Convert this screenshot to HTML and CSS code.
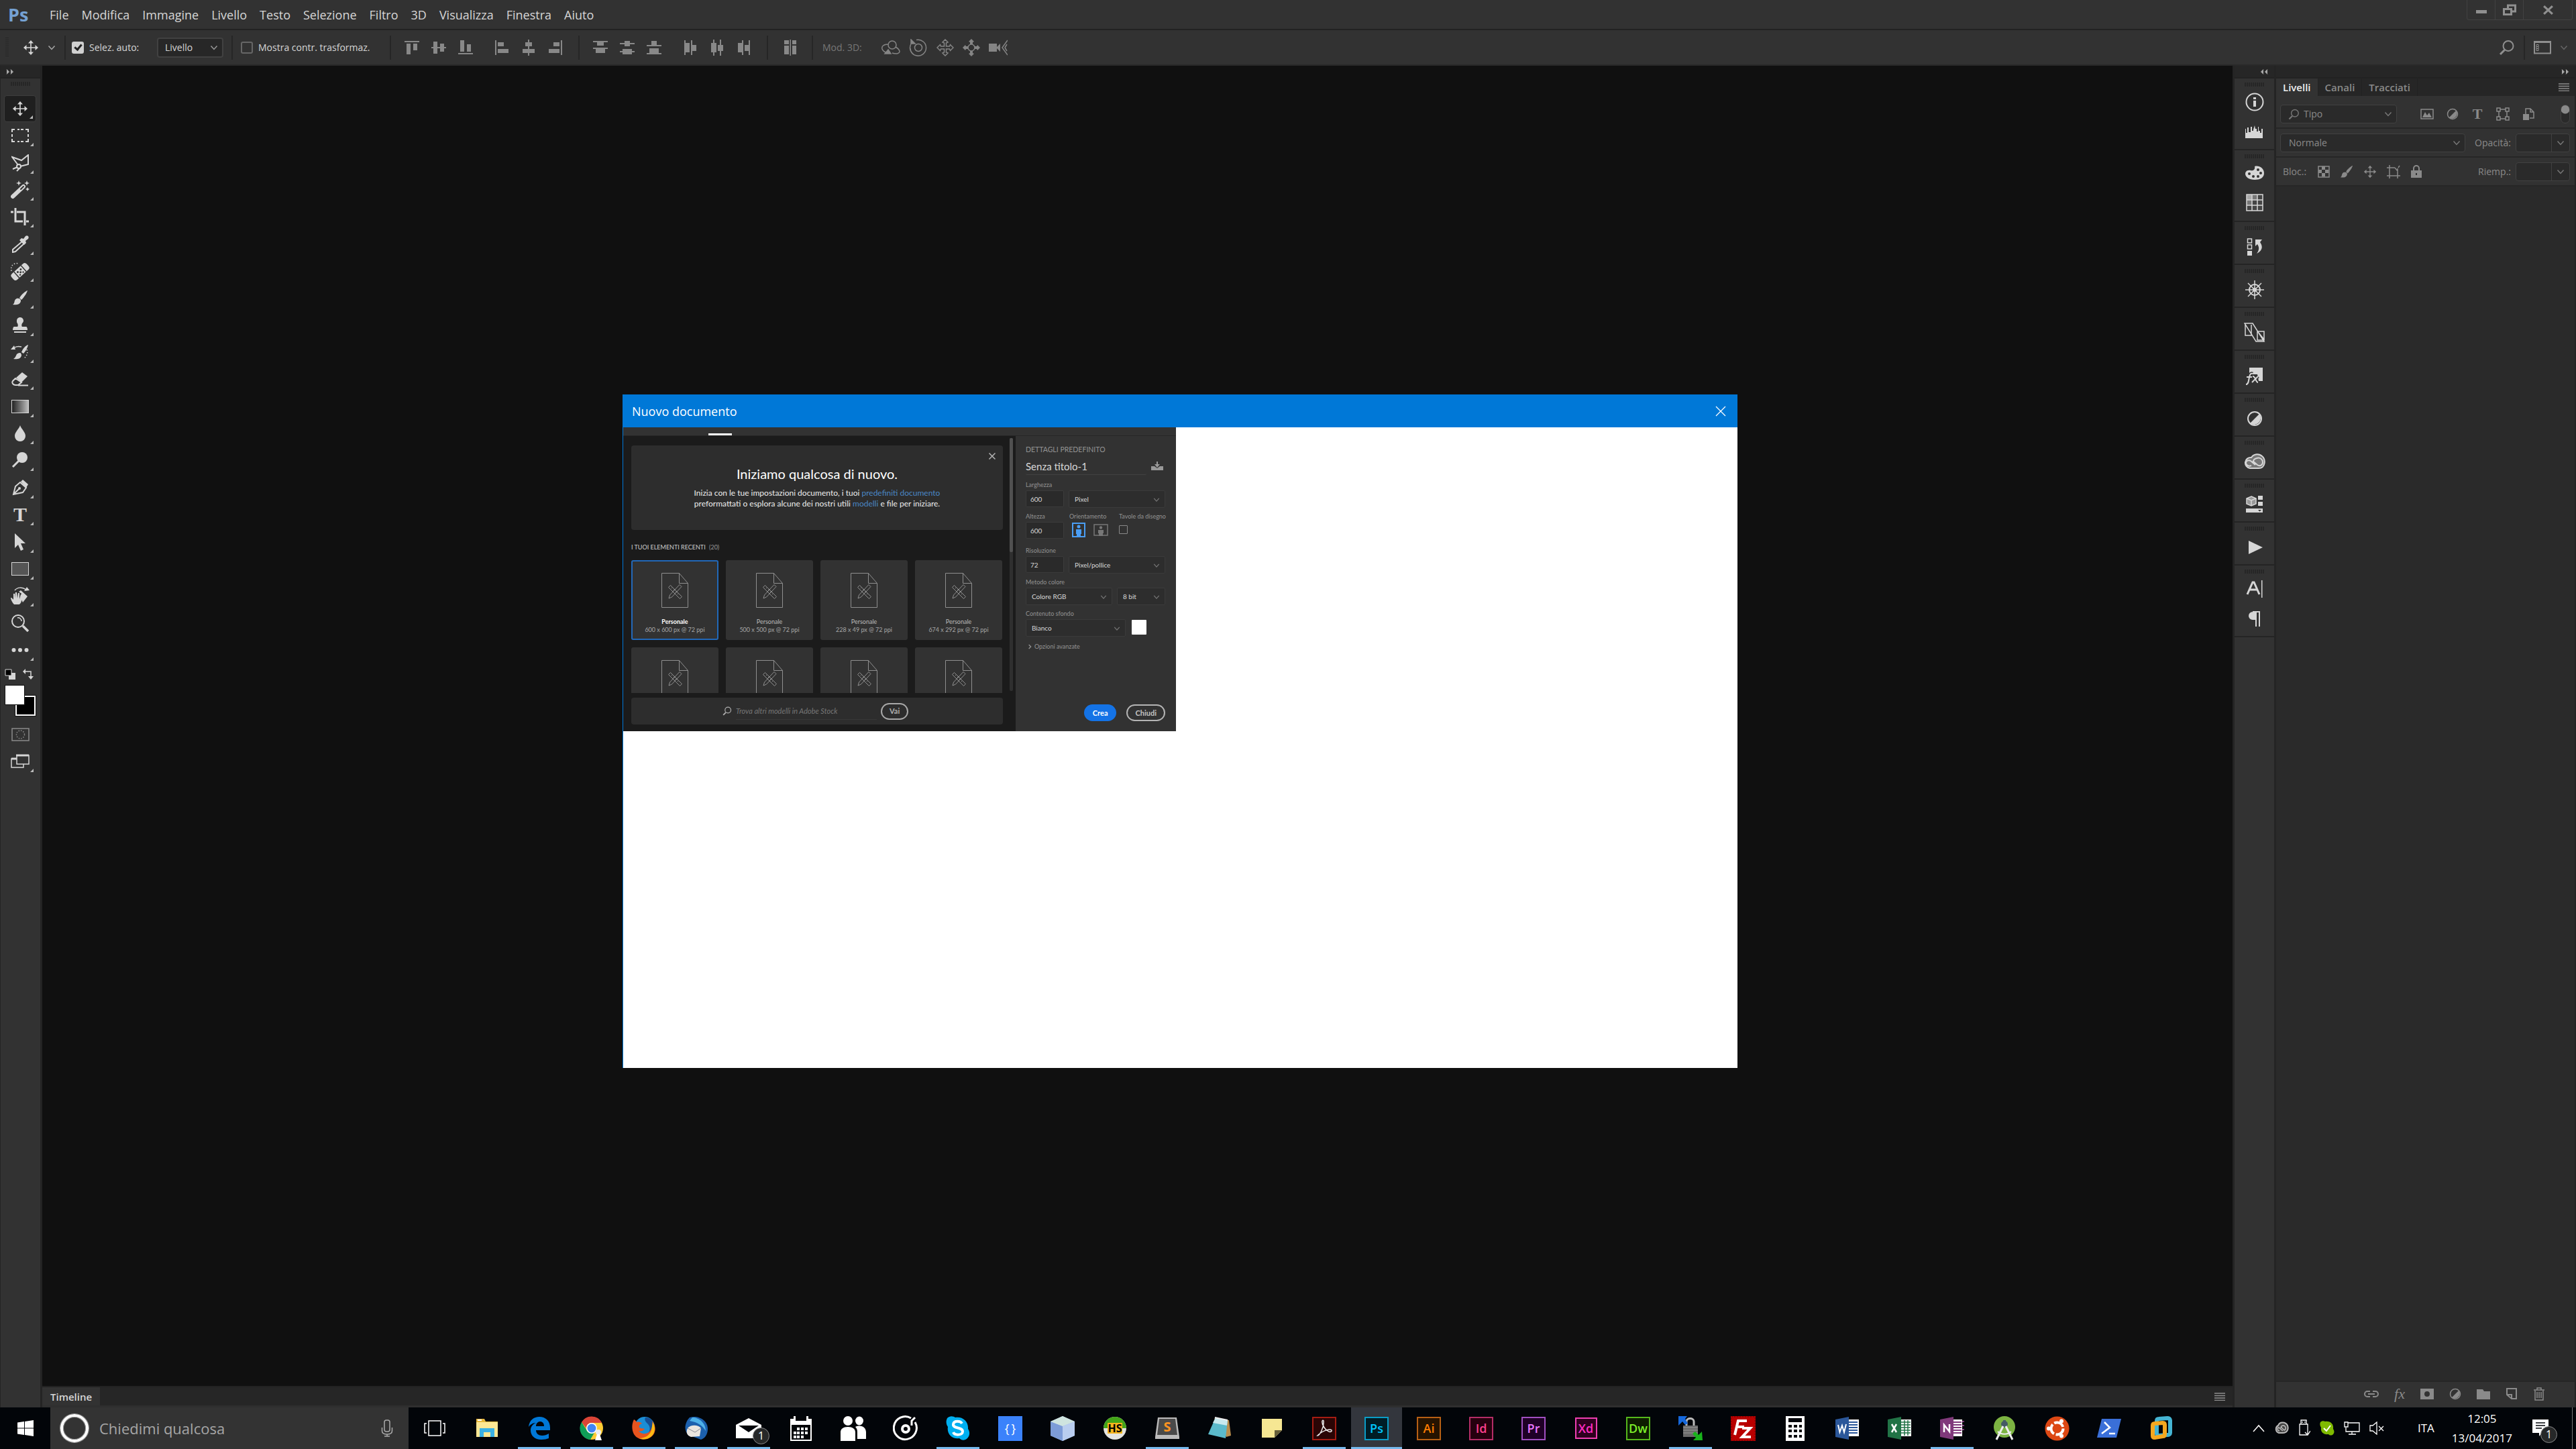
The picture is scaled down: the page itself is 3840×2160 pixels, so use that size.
FILE: index.html
```
<!DOCTYPE html>
<html lang="it">
<head>
    <meta charset="UTF-8">
    <meta name="viewport" content="width=device-width, initial-scale=1.0">
    <title>Nuovo documento</title>
    <link rel="stylesheet" href="styles.css">
</head>
<body>

<!-- icone condivise -->
<svg class="sprite" aria-hidden="true">
    <symbol id="i-move" viewBox="0 0 24 24"><path d="M12 4v16M4 12h16" fill="none" stroke="currentColor" stroke-width="1.6"/><path d="M12 1l4 4.5H8zM12 23l-4-4.500h8zM1 12l4.500-4v8zM23 12l-4.500 4V8z" fill="currentColor"/></symbol>
    <symbol id="i-chevron" viewBox="0 0 12 12"><path d="M1.500 3.500L6 8.500l4.500-5" fill="none" stroke="currentColor" stroke-width="1.5"/></symbol>
    <symbol id="i-chevright" viewBox="0 0 12 12"><path d="M4 1.500L8.500 6 4 10.500" fill="none" stroke="currentColor" stroke-width="2"/></symbol>
    <symbol id="i-next" viewBox="0 0 12 10"><path d="M1 1.500L4.500 5 1 8.500M7 1.500L10.500 5 7 8.500" fill="currentColor" stroke="currentColor"/></symbol>
    <symbol id="i-prev" viewBox="0 0 12 10"><path d="M5 1.500L1.500 5 5 8.500M11 1.500L7.500 5 11 8.500" fill="currentColor" stroke="currentColor"/></symbol>
    <symbol id="i-search" viewBox="0 0 24 24"><circle cx="14" cy="9.500" r="7.500" fill="none" stroke="currentColor" stroke-width="2"/><path d="M8.500 15.500L2 22" stroke="currentColor" stroke-width="3"/></symbol>
    <symbol id="i-menu" viewBox="0 0 16 12"><path d="M0 1h16M0 4.500h16M0 8h16M0 11.500h16" stroke="currentColor" stroke-width="1.6"/></symbol>
    <symbol id="i-close" viewBox="0 0 16 16"><path d="M2 2l12 12M14 2L2 14" stroke="currentColor" stroke-width="2"/></symbol>
    <symbol id="i-adjust" viewBox="0 0 24 24"><circle cx="12" cy="12" r="10" fill="none" stroke="currentColor" stroke-width="2"/><path d="M19 5A10 10 0 0 1 5 19z" fill="currentColor"/></symbol>
    <symbol id="i-brush" viewBox="0 0 24 24"><path d="M23 1c-3 1-9 6-12 11l3 3C18 11 22 5 23 1zM10 13c-4-1-6 2-6.500 5-.4 2-1 3-2.500 4 5 1 11 0 12-5 .3-2-1-4-3-4z" fill="currentColor"/></symbol>
    <symbol id="i-doc" viewBox="0 0 40 56"><g fill="none" stroke="#8f8f8f"><path d="M.5.500h26l13 15v36h-39zM26.500.500v15h13"/><path d="M13.500 18.500l17 17-3 3-17-17z"/><path d="M27 17.500l3 3-14.500 15.500-4.500 2 1.500-5z"/><path d="M15 23l2-2M18 26l2-2M21 29l2-2M24 32l2-2"/></g></symbol>
    <!-- allinea -->
    <symbol id="a-top" viewBox="0 0 24 24"><path d="M1 2h22v2H1zM4 6h6v16H4zM14 6h6v10h-6z" fill="currentColor"/></symbol>
    <symbol id="a-mid" viewBox="0 0 24 24"><path d="M1 11h22v2H1zM4 3h6v18H4zM14 6h6v12h-6z" fill="currentColor"/></symbol>
    <symbol id="a-bot" viewBox="0 0 24 24"><path d="M1 20h22v2H1zM4 1h6v17H4zM14 7h6v11h-6z" fill="currentColor"/></symbol>
    <symbol id="a-left" viewBox="0 0 24 24"><path d="M2 1h2v22H2zM6 4h9v6H6zM6 14h16v6H6z" fill="currentColor"/></symbol>
    <symbol id="a-cen" viewBox="0 0 24 24"><path d="M11 0h2v24h-2zM7 4h10v6H7zM3 14h18v6H3z" fill="currentColor"/></symbol>
    <symbol id="a-right" viewBox="0 0 24 24"><path d="M20 1h2v22h-2zM9 4h9v6H9zM2 14h16v6H2z" fill="currentColor"/></symbol>
    <symbol id="d-top" viewBox="0 0 24 24"><path d="M1 2h22v2H1zM7 4h10v5H7zM1 12h22v2H1zM5 14h14v6H5z" fill="currentColor"/></symbol>
    <symbol id="d-mid" viewBox="0 0 24 24"><path d="M1 5h22v2H1zM8 2h8v8H8zM1 17h22v2H1zM5 14h14v8H5z" fill="currentColor"/></symbol>
    <symbol id="d-bot" viewBox="0 0 24 24"><path d="M1 8h22v2H1zM8 2h8v7H8zM1 20h22v2H1zM5 13h14v7H5z" fill="currentColor"/></symbol>
    <symbol id="d-left" viewBox="0 0 24 24"><path d="M3 1h2v22H3zM5 5h6v14H5zM13 1h2v22h-2zM15 8h6v9h-6z" fill="currentColor"/></symbol>
    <symbol id="d-cen" viewBox="0 0 24 24"><path d="M6 0h2v24H6zM3 5h8v14H3zM16 0h2v24h-2zM13 8h8v9h-8z" fill="currentColor"/></symbol>
    <symbol id="d-right" viewBox="0 0 24 24"><path d="M9 1h2v22H9zM3 5h6v14H3zM19 1h2v22h-2zM13 8h6v9h-6z" fill="currentColor"/></symbol>
</svg>

<div class="app">

    <header class="menubar">
        <div class="logo">Ps</div>
        <nav class="menu">
            <a href="#">File</a>
            <a href="#">Modifica</a>
            <a href="#">Immagine</a>
            <a href="#">Livello</a>
            <a href="#">Testo</a>
            <a href="#">Selezione</a>
            <a href="#">Filtro</a>
            <a href="#">3D</a>
            <a href="#">Visualizza</a>
            <a href="#">Finestra</a>
            <a href="#">Aiuto</a>
        </nav>
        <div class="window-buttons">
            <button type="button" aria-label="Riduci"><svg width="16" height="16" viewBox="0 0 16 16"><path d="M0 8h16v5H0z" fill="currentColor"/></svg></button>
            <button type="button" aria-label="Ripristina"><svg width="20" height="18" viewBox="0 0 20 18"><path d="M7.500 6V2h11v9H13M1.500 7.500h11v8h-11z" fill="none" stroke="currentColor" stroke-width="3"/></svg></button>
            <button type="button" class="wide" aria-label="Chiudi"><svg width="17" height="17" viewBox="0 0 16 16"><path d="M2 3l12 11M14 3L2 14" stroke="currentColor" stroke-width="3"/></svg></button>
        </div>
    </header>

    <div class="options">
        <div class="opt first">
            <span class="grip-v"></span>
            <svg class="move" width="24" height="24"><use href="#i-move"/></svg>
            <svg class="chev" width="12" height="12"><use href="#i-chevron"/></svg>
        </div>
        <div class="opt auto">
            <label class="check"><input type="checkbox" checked> Selez. auto:</label>
            <span class="select"><select aria-label="Seleziona"><option>Livello</option></select><svg width="12" height="12"><use href="#i-chevron"/></svg></span>
        </div>
        <div class="opt transform">
            <label class="check"><input type="checkbox"> Mostra contr. trasformaz.</label>
        </div>
        <div class="opt align">
            <svg width="24" height="24"><use href="#a-top"/></svg>
            <svg width="24" height="24"><use href="#a-mid"/></svg>
            <svg width="24" height="24"><use href="#a-bot"/></svg>
            <svg class="apart" width="24" height="24"><use href="#a-left"/></svg>
            <svg width="24" height="24"><use href="#a-cen"/></svg>
            <svg width="24" height="24"><use href="#a-right"/></svg>
        </div>
        <div class="opt align">
            <svg width="24" height="24"><use href="#d-top"/></svg>
            <svg width="24" height="24"><use href="#d-mid"/></svg>
            <svg width="24" height="24"><use href="#d-bot"/></svg>
            <svg class="apart" width="24" height="24"><use href="#d-left"/></svg>
            <svg width="24" height="24"><use href="#d-cen"/></svg>
            <svg width="24" height="24"><use href="#d-right"/></svg>
        </div>
        <div class="opt single">
            <svg width="24" height="24" viewBox="0 0 24 24"><path d="M3 1h7v6H3zM3 9h7v13H3zM11.500 0h1.500v24h-1.500zM15 1h6v6h-6zM15 9h6v13h-6z" fill="currentColor"/></svg>
        </div>
        <div class="opt mode3d">
            <span>Mod. 3D:</span>
            <svg width="28" height="24" viewBox="0 0 28 24" fill="none" stroke="currentColor" stroke-width="1.500"><circle cx="16" cy="8" r="6"/><path d="M10 7C3 7 0 10 1 14c1 3 4 5 8 6M21 11c7 4 8 9 2 10-3 0-5 0-7-1"/><path d="M10 15l4 6H5z" fill="currentColor"/></svg>
            <svg width="28" height="26" viewBox="0 0 28 26" fill="none" stroke="currentColor" stroke-width="1.500"><circle cx="14" cy="13" r="5.500"/><path d="M11 1.500a12 12 0 1 1-8 6M2 14a12 12 0 0 0 5 9"/><path d="M3 1v6h6z" fill="currentColor"/></svg>
            <svg width="26" height="26" viewBox="0 0 26 26" fill="none" stroke="currentColor" stroke-width="1.500"><path d="M13 1l4 4-2.500 1v5h5l1-2.500 4.500 4.500-4.500 4.500-1-2.500h-5v5l2.500 1-4 4-4-4 2.500-1v-5h-5l-1 2.500L1 13l4.500-4.500 1 2.500h5V6L9 5z"/></svg>
            <svg width="26" height="26" viewBox="0 0 26 26"><circle cx="13" cy="13" r="5" fill="none" stroke="currentColor" stroke-width="1.500"/><path d="M13 0l4 4-2 1v3h-4V5L9 4zM13 26l-4-4 2-1v-3h4v3l2 1zM0 13l4-4 1 2h3v4H5l-1 2zM26 13l-4 4-1-2h-3v-4h3l1-2z" fill="currentColor"/></svg>
            <svg width="28" height="24" viewBox="0 0 28 24"><path d="M0 6h12v12H0zM12 11l5-5v12l-5-5z" fill="currentColor"/><path d="M28 1l-8 11 8 11M27 7l-3 5 3 5" fill="none" stroke="currentColor" stroke-width="1.500"/></svg>
        </div>
        <div class="opt-right">
            <svg width="24" height="24"><use href="#i-search"/></svg>
            <span class="divider"></span>
            <svg width="26" height="20" viewBox="0 0 26 20"><path d="M1 1.500h24v17H1z" fill="none" stroke="currentColor" stroke-width="2"/><path d="M0 0h26v3H0z" fill="currentColor"/><path d="M4 5.500h3v3H4zM4 8.500h3v3H4zM4 11.500h3v3H4z" fill="none" stroke="currentColor"/></svg>
            <svg class="chev" width="12" height="12"><use href="#i-chevron"/></svg>
        </div>
    </div>

    <main class="workspace">

        <aside class="toolbar">
            <div class="strip"><svg width="12" height="10"><use href="#i-next"/></svg></div>
            <span class="grip"></span>
            <div class="tools">
                <button type="button" class="tool active" aria-label="Sposta"><svg width="24" height="24"><use href="#i-move"/></svg></button>
                <button type="button" class="tool" aria-label="Selezione rettangolare"><svg width="26" height="24" viewBox="0 0 26 24" fill="none" stroke="currentColor" stroke-width="2"><path d="M1 7V3h4M9 3h3M14 3h4M21 3h4v4M25 10v4M25 17v4h-4M18 21h-4M12 21H9M5 21H1v-4M1 14v-4"/></svg></button>
                <button type="button" class="tool" aria-label="Lazo"><svg width="26" height="26" viewBox="0 0 26 26" fill="none" stroke="currentColor" stroke-width="2"><path d="M10 16L1 4l14 5 10-8v14l-12 3"/><circle cx="11" cy="18" r="3"/><path d="M9 19l-7 3M12 21l-4 4"/></svg></button>
                <button type="button" class="tool" aria-label="Bacchetta magica"><svg width="28" height="28" viewBox="0 0 28 28"><path d="M3 24L19 9" stroke="currentColor" stroke-width="6" stroke-linecap="round"/><path d="M15 13l4-4" stroke="#323232" stroke-width="2" stroke-linecap="round"/><path d="M12 0l1 3 3 1-3 1-1 3-1-3-3-1 3-1zM24 0l1 3 3 1-3 1-1 3-1-3-3-1 3-1zM25 10l1 2 2 1-2 1-1 2-1-2-2-1 2-1z" fill="currentColor"/></svg></button>
                <button type="button" class="tool" aria-label="Taglierina"><svg width="28" height="26" viewBox="0 0 28 26" fill="none" stroke="currentColor" stroke-width="3"><path d="M7 0v20h11M23 20h4M0 6h4M9 6h12v20"/></svg></button>
                <button type="button" class="tool" aria-label="Contagocce"><svg width="26" height="26" viewBox="0 0 26 26"><path d="M16 9l3 3L6 24l-4 1v-4z" fill="none" stroke="currentColor" stroke-width="2"/><path d="M12 7l3-3 3 1 3-4c3-2 6 1 4 4l-4 3 1 3-3 3z" fill="currentColor"/></svg></button>
                <button type="button" class="tool" aria-label="Cerotto"><svg width="28" height="28" viewBox="0 0 28 28"><g transform="rotate(-42 14 15)"><rect x="-1" y="9" width="30" height="12" rx="4" fill="currentColor"/><path d="M7 9v12M21 9v12" stroke="#323232" stroke-width="1.500"/><g fill="#323232"><circle cx="11" cy="13" r="1.500"/><circle cx="17" cy="13" r="1.500"/><circle cx="14" cy="16" r="1.500"/><circle cx="11" cy="18.500" r="1.200"/><circle cx="17" cy="18.500" r="1.200"/></g></g><path d="M1 14C-1 6 5 1 12 3" fill="none" stroke="currentColor" stroke-width="1.500" stroke-dasharray="1.500 2.500"/></svg></button>
                <button type="button" class="tool" aria-label="Pennello"><svg width="24" height="24"><use href="#i-brush"/></svg></button>
                <button type="button" class="tool" aria-label="Timbro clone"><svg width="24" height="24" viewBox="0 0 24 24"><path d="M7 5a5 5 0 1 1 8 4c-1 2-1 4 0 5h6c1 0 2 2 2 5H1c0-3 1-5 2-5h5c1-1 1-3 0-5-1-1-1-2-1-4zM3 21h18v2H3z" fill="currentColor"/></svg></button>
                <button type="button" class="tool" aria-label="Pennello storia"><svg width="28" height="24" viewBox="0 0 28 24"><path d="M26 1c-4 1-8 6-10 11l3 2c4-4 6-9 7-13zM14 13c-3 0-5 1-6 4-1 2-2 4-4 5 5 1 11 0 12-5 0-2-1-4-2-4zM0 8l5-6 2 6z" fill="currentColor"/><path d="M6 5c3-2 6-2 10-1" fill="none" stroke="currentColor" stroke-width="1.500"/><path d="M24 8c2 5 0 10-5 14" fill="none" stroke="currentColor" stroke-width="1.500" stroke-dasharray="1.500 2.500"/></svg></button>
                <button type="button" class="tool" aria-label="Gomma"><svg width="26" height="24" viewBox="0 0 26 24"><path d="M7 10L16 2l8 6-9 9z" fill="currentColor"/><path d="M6 11l-4 4c-2 3 1 6 4 6h4l5-4zM10 21.500h15" fill="none" stroke="currentColor" stroke-width="2"/></svg></button>
                <button type="button" class="tool" aria-label="Sfumatura"><span class="gradient"></span></button>
                <button type="button" class="tool" aria-label="Sfoca"><svg width="24" height="26" viewBox="0 0 24 26"><path d="M12 1c2 6 8 10 8 16a8 8 0 0 1-16 0C4 11 10 7 12 1z" fill="currentColor"/></svg></button>
                <button type="button" class="tool" aria-label="Scherma"><svg width="26" height="26" viewBox="0 0 26 26"><circle cx="16" cy="9" r="8" fill="currentColor"/><path d="M11 14L2 23" stroke="currentColor" stroke-width="3"/></svg></button>
                <button type="button" class="tool" aria-label="Penna"><svg width="24" height="24" viewBox="0 0 24 24"><path d="M2 22L5 10l7-6 9 8-5 7zM2 22l8-8" fill="none" stroke="currentColor" stroke-width="2"/><path d="M13 3l3-3 8 7-3 5z" fill="currentColor"/><circle cx="11" cy="13" r="2" fill="currentColor"/></svg></button>
                <button type="button" class="tool letter" aria-label="Testo">T</button>
                <button type="button" class="tool" aria-label="Selezione tracciato"><svg width="20" height="28" viewBox="0 0 20 28"><path d="M2 1l16 15h-7l4 9-4 2-4-9-5 5z" fill="currentColor"/></svg></button>
                <button type="button" class="tool" aria-label="Rettangolo"><span class="shape"></span></button>
                <button type="button" class="tool" aria-label="Ruota vista"><svg width="28" height="28" viewBox="0 0 28 28"><path d="M15 6l10 9-7 9-2-4V11l-4-3zM5 27c-3-3-5-8-5-10 2 0 3 2 4 3V11h2v7l1-9h2l1 9 1-8h2v9l2-7h2l-1 10c-1 4-3 5-4 5zM20 7l8-1-4-5z" fill="currentColor"/><path d="M6 6c4-5 11-5 17-1" fill="none" stroke="currentColor" stroke-width="1.500"/></svg></button>
                <button type="button" class="tool plain" aria-label="Zoom"><svg width="26" height="26" viewBox="0 0 26 26" fill="none" stroke="currentColor"><circle cx="10" cy="10" r="9" stroke-width="2"/><path d="M9 5c3-1 6 2 6 5" stroke-width="1.500"/><path d="M17 17l8 8" stroke-width="3.500"/></svg></button>
                <button type="button" class="tool" aria-label="Altro"><svg width="26" height="8" viewBox="0 0 26 8" fill="currentColor"><circle cx="3.500" cy="4" r="3"/><circle cx="13" cy="4" r="3"/><circle cx="22.500" cy="4" r="3"/></svg></button>
            </div>
            <div class="color-actions">
                <svg width="16" height="16" viewBox="0 0 16 16"><path d="M6 6h10v10H6z" fill="currentColor"/><path d="M1 1h9v9H1z" fill="#000" stroke="currentColor"/></svg>
                <svg width="16" height="16" viewBox="0 0 16 16"><path d="M3 4h9v9" fill="none" stroke="currentColor" stroke-width="1.500"/><path d="M0 4l4-4v8zM12 16l-4-5h8z" fill="currentColor"/></svg>
            </div>
            <div class="colors"><span class="back"></span><span class="front"></span></div>
            <button type="button" class="tool plain mask" aria-label="Maschera veloce"><svg width="27" height="20" viewBox="0 0 27 20" fill="none" stroke="#8a8a8a"><path d="M1 1h25v18H1z" stroke-width="1.500"/><circle cx="13.500" cy="10" r="6" stroke-width="1.500" stroke-dasharray="1.500 2"/></svg></button>
            <button type="button" class="tool" aria-label="Modo schermo"><svg width="28" height="22" viewBox="0 0 28 22" fill="none" stroke="currentColor" stroke-width="1.500"><path d="M9 7H1v13h18v-5M9 2h18v13H9z"/><path d="M8 2h19M1 7h8" stroke-width="3"/></svg></button>
        </aside>

        <section class="center">
            <div class="canvas"></div>
            <div class="timeline">
                <button type="button" class="timeline-tab">Timeline</button>
                <svg width="16" height="12"><use href="#i-menu"/></svg>
            </div>
        </section>

        <aside class="icon-dock">
            <div class="strip end"><svg width="12" height="10"><use href="#i-prev"/></svg></div>
            <div class="dock-group two">
                <span class="grip"></span>
                <svg width="28" height="28" viewBox="0 0 28 28"><circle cx="14" cy="14" r="12.500" fill="none" stroke="currentColor" stroke-width="2"/><path d="M12 7h4v3h-4zM12 12h4v9h-4z" fill="currentColor"/></svg>
                <svg width="28" height="24" viewBox="0 0 28 24"><path d="M0 21V7h1v6h2V5h2v7h3V4h2v6h2V8l2-6 1 5h2v4h2V4h1v6h2v3h2V7h2v14z" fill="currentColor"/></svg>
            </div>
            <div class="dock-group two">
                <span class="grip"></span>
                <svg width="28" height="24" viewBox="0 0 28 24"><path d="M14 2c8-2 14 4 14 10 0 7-6 10-14 10C6 22 0 18 0 13c0-4 4-6 8-5 4 1 7-1 6-6z" fill="currentColor"/><g fill="#323232"><circle cx="6" cy="13" r="2"/><circle cx="12" cy="17" r="2"/><circle cx="19" cy="17" r="2"/><circle cx="23" cy="12" r="2"/><circle cx="19" cy="7" r="2"/></g></svg>
                <svg width="26" height="26" viewBox="0 0 26 26"><path d="M1 1h24v24H1z" fill="#444"/><path d="M1 1h8v8H1z" fill="#aaa"/><path d="M9 1h8v8H9zM1 9h8v8H1z" fill="#777"/><path d="M1 1h24v24H1zM9 1v24M17 1v24M1 9h24M1 17h24" fill="none" stroke="currentColor" stroke-width="1.500"/></svg>
            </div>
            <div class="dock-group">
                <span class="grip"></span>
                <svg width="24" height="28" viewBox="0 0 24 28"><path d="M1.500 2h6v6h-6zM1.500 11h6v6h-6z" fill="none" stroke="currentColor" stroke-width="1.500"/><path d="M1 20h7v7H1zM13 3h10l-3 4c5 7 3 13-5 17 4-5 4-10 1-14l-3 3z" fill="currentColor"/></svg>
            </div>
            <div class="dock-group">
                <span class="grip"></span>
                <svg width="30" height="30" viewBox="0 0 30 30" fill="none" stroke="currentColor" stroke-width="2"><circle cx="15" cy="15" r="8"/><circle cx="15" cy="15" r="2" fill="currentColor"/><path d="M15 1v28M1 15h28M5 5l20 20M25 5L5 25" stroke-width="1.500"/></svg>
            </div>
            <div class="dock-group">
                <span class="grip"></span>
                <svg width="32" height="30" viewBox="0 0 32 30" fill="none" stroke="currentColor" stroke-width="1.500"><path d="M1 1h12l17 27H18zM2 3v16h9V3M20 13h10v13H20zM22 15l8 10"/></svg>
            </div>
            <div class="dock-group">
                <span class="grip"></span>
                <svg width="28" height="28" viewBox="0 0 28 28"><path d="M6 2h20v20h-6l-2-10H6z" fill="currentColor"/><path d="M1 27c4 0 4-6 5-11 1-4 2-6 5-5M2 16h8M11 15c5 0 4 9 8 9M19 15l-9 9" fill="none" stroke="#323232" stroke-width="5"/><path d="M1 27c4 0 4-6 5-11 1-4 2-6 5-5M2 16h8M11 15c5 0 4 9 8 9M19 15l-9 9" fill="none" stroke="currentColor" stroke-width="2"/></svg>
            </div>
            <div class="dock-group">
                <span class="grip"></span>
                <svg width="24" height="24"><use href="#i-adjust"/></svg>
            </div>
            <div class="dock-group">
                <span class="grip"></span>
                <svg width="32" height="24" viewBox="0 0 32 24" fill="none" stroke="currentColor" stroke-width="2"><path d="M9 22a8 8 0 1 1 2-16c4-6 12-6 16-2 6 5 5 18-5 18z" fill="#777"/><path d="M17 17l-7-6c-3-2-7 0-7 3s4 6 8 4M13 11l7 6c4 3 8 0 8-4s-4-8-9-6c-4 1-5 3-5 5"/></svg>
            </div>
            <div class="dock-group">
                <span class="grip"></span>
                <svg width="26" height="26" viewBox="0 0 26 26"><path d="M8 1l7 3v8l-7 3-7-3V4z" fill="#999" stroke="currentColor" stroke-width="1.500"/><path d="M1 4l7 3 7-3M8 7v8" fill="none" stroke="currentColor" stroke-width="1.500"/><path d="M18 0h7v6h-7zM18 9h7v6h-7zM0 19h25v6H0z" fill="currentColor"/><path d="M18 21h5l-2.500 2.500z" fill="#323232"/></svg>
            </div>
            <div class="dock-group">
                <span class="grip"></span>
                <svg width="24" height="24" viewBox="0 0 24 24"><path d="M3 2l21 10L3 22z" fill="currentColor"/></svg>
            </div>
            <div class="dock-group two">
                <span class="grip"></span>
                <svg width="26" height="28" viewBox="0 0 26 28"><path d="M2 22L10 4h2l8 18M6 15h10" fill="none" stroke="currentColor" stroke-width="3"/><path d="M23 1h1.500v26H23z" fill="currentColor"/></svg>
                <svg width="24" height="24" viewBox="0 0 24 24"><path d="M9 0h11v2H9zM9 13A6 6 0 0 1 9 1h4v12zM13 1h2v22h-2zM18 1h2v22h-2z" fill="currentColor"/></svg>
            </div>
        </aside>

        <aside class="layers">
            <div class="strip end"><svg width="12" height="10"><use href="#i-next"/></svg></div>
            <div class="tabs">
                <button type="button" class="selected">Livelli</button>
                <button type="button">Canali</button>
                <button type="button">Tracciati</button>
                <svg width="16" height="12"><use href="#i-menu"/></svg>
            </div>
            <div class="layer-row filter">
                <span class="select type"><svg class="lens" width="17" height="17"><use href="#i-search"/></svg><select aria-label="Filtro"><option>Tipo</option></select><svg width="12" height="12"><use href="#i-chevron"/></svg></span>
                <div class="filter-icons">
                    <svg width="20" height="18" viewBox="0 0 20 18"><path d="M1 2h18v14H1z" fill="none" stroke="currentColor" stroke-width="1.500"/><path d="M3 14l4-8 3 5 3-4 4 7z" fill="currentColor"/></svg>
                    <svg width="18" height="18"><use href="#i-adjust"/></svg>
                    <span class="t">T</span>
                    <svg width="20" height="20" viewBox="0 0 20 20" fill="none" stroke="currentColor" stroke-width="1.500"><path d="M4 3h12v14H4z"/><path d="M1 1h5v5H1zM14 1h5v5h-5zM1 14h5v5H1zM14 14h5v5h-5z" fill="#323232"/></svg>
                    <svg width="18" height="20" viewBox="0 0 18 20"><path d="M5 10V2h7l5 5v9h-6M12 2v5h5" fill="none" stroke="currentColor" stroke-width="1.500"/><path d="M1 10h9v9H1z" fill="currentColor"/></svg>
                </div>
                <span class="switch"></span>
            </div>
            <div class="layer-row">
                <span class="select blend"><select aria-label="Metodo di fusione"><option>Normale</option></select><svg width="12" height="12"><use href="#i-chevron"/></svg></span>
                <label class="amount">Opacità: <span class="number"><input type="text"><svg width="12" height="12"><use href="#i-chevron"/></svg></span></label>
            </div>
            <div class="layer-row">
                <span class="lock-label">Bloc.:</span>
                <div class="lock-icons">
                    <svg width="18" height="18" viewBox="0 0 18 18"><path d="M1 1h16v16H1z" fill="none" stroke="currentColor" stroke-width="1.500"/><path d="M6 1h5v5H6zM1 6h5v5H1zM11 6h5v5h-5zM6 11h5v5H6z" fill="currentColor"/></svg>
                    <svg width="20" height="20"><use href="#i-brush"/></svg>
                    <svg width="20" height="20"><use href="#i-move"/></svg>
                    <svg width="20" height="20" viewBox="0 0 20 20"><path d="M4 0v20M0 4h12M0 16h20M16 10v10M12 4l4 5V5M17 4l2-3" fill="none" stroke="currentColor" stroke-width="1.500"/></svg>
                    <svg width="18" height="20" viewBox="0 0 18 20"><path d="M5 9V5a4 4 0 0 1 8 0v4" fill="none" stroke="currentColor" stroke-width="2"/><path d="M1 8h16v11H1zM8 12v3h2v-3z" fill="currentColor" fill-rule="evenodd"/></svg>
                </div>
                <label class="amount">Riemp.: <span class="number"><input type="text"><svg width="12" height="12"><use href="#i-chevron"/></svg></span></label>
            </div>
            <div class="layer-list"></div>
            <div class="layer-footer">
                <svg width="22" height="18" viewBox="0 0 22 18" fill="none" stroke="currentColor" stroke-width="2"><path d="M9 5H5a4 4 0 0 0 0 8h4M13 5h4a4 4 0 0 1 0 8h-4M6 9h10"/></svg>
                <em>fx</em>
                <svg width="20" height="18" viewBox="0 0 20 18"><path d="M0 1h20v16H0zM10 5a4 4 0 1 0 0 8 4 4 0 0 0 0-8z" fill="currentColor" fill-rule="evenodd"/></svg>
                <svg width="18" height="18"><use href="#i-adjust"/></svg>
                <svg width="20" height="18" viewBox="0 0 20 18"><path d="M0 2h9l2 3h9v12H0z" fill="currentColor"/></svg>
                <svg width="18" height="18" viewBox="0 0 18 18"><path d="M2 1h14v15H9l-7-6zM9 16v-6H2" fill="none" stroke="currentColor" stroke-width="2"/></svg>
                <svg width="18" height="20" viewBox="0 0 18 20"><path d="M1 4h16M6 4V1h6v3M3 5v14h12V5M6 7v9M9 7v9M12 7v9" fill="none" stroke="currentColor" stroke-width="1.500"/></svg>
            </div>
        </aside>
    </main>

    <!-- finestra Nuovo documento -->
    <div class="dialog" role="dialog" aria-labelledby="dialog-title">
        <div class="dialog-title">
            <h1 id="dialog-title">Nuovo documento</h1>
            <button type="button" aria-label="Chiudi"><svg width="16" height="16" viewBox="0 0 16 16"><path d="M1 1l14 14M15 1L1 15" stroke="#fff" stroke-width="1.300"/></svg></button>
        </div>
        <div class="newdoc">
            <div class="newdoc-tabs"><span></span></div>
            <div class="browse">
                <div class="browse-scroll">
                    <div class="hero">
                        <button type="button" aria-label="Nascondi"><svg width="12" height="12"><use href="#i-close"/></svg></button>
                        <h2>Iniziamo qualcosa di nuovo.</h2>
                        <p>Inizia con le tue impostazioni documento, i tuoi <a href="#">predefiniti documento</a><br>preformattati o esplora alcune dei nostri utili <a href="#">modelli</a> e file per iniziare.</p>
                    </div>
                    <h3>I TUOI ELEMENTI RECENTI <span>(20)</span></h3>
                    <div class="recent">
                        <div class="preset current"><svg width="40" height="56"><use href="#i-doc"/></svg><b>Personale</b><span>600 x 600 px @ 72 ppi</span></div>
                        <div class="preset"><svg width="40" height="56"><use href="#i-doc"/></svg><b>Personale</b><span>500 x 500 px @ 72 ppi</span></div>
                        <div class="preset"><svg width="40" height="56"><use href="#i-doc"/></svg><b>Personale</b><span>228 x 49 px @ 72 ppi</span></div>
                        <div class="preset"><svg width="40" height="56"><use href="#i-doc"/></svg><b>Personale</b><span>674 x 292 px @ 72 ppi</span></div>
                        <div class="preset"><svg width="40" height="56"><use href="#i-doc"/></svg></div>
                        <div class="preset"><svg width="40" height="56"><use href="#i-doc"/></svg></div>
                        <div class="preset"><svg width="40" height="56"><use href="#i-doc"/></svg></div>
                        <div class="preset"><svg width="40" height="56"><use href="#i-doc"/></svg></div>
                    </div>
                </div>
                <div class="scrollbar"><span></span></div>
                <div class="stock">
                    <svg width="14" height="14"><use href="#i-search"/></svg>
                    <input type="text" aria-label="Cerca modelli" placeholder="Trova altri modelli in Adobe Stock">
                    <button type="button">Vai</button>
                </div>
            </div>
            <form class="details">
                <h3>DETTAGLI PREDEFINITO</h3>
                <div class="name-row">
                    <input type="text" aria-label="Nome" value="Senza titolo-1">
                    <svg width="18" height="14" viewBox="0 0 18 14"><path d="M0 7h5l4 3 4-3h5v6H0zM8 0h2v4h3L9 9 5 4h3z" fill="#999"/></svg>
                </div>
                <label for="larghezza">Larghezza</label>
                <div class="field-row">
                    <input type="text" id="larghezza" value="600">
                    <span class="select"><select aria-label="Unità"><option>Pixel</option></select><svg width="10" height="10"><use href="#i-chevron"/></svg></span>
                </div>
                <div class="triple">
                    <div>
                        <label for="altezza">Altezza</label>
                        <input type="text" id="altezza" value="600">
                    </div>
                    <div>
                        <span class="caption">Orientamento</span>
                        <div class="orient">
                            <button type="button" class="on" aria-label="Verticale"><svg width="20" height="22" viewBox="0 0 20 22"><path d="M1 1h18v20H1z" fill="none" stroke="currentColor" stroke-width="2"/><circle cx="10" cy="6" r="2.500" fill="currentColor"/><path d="M6 10h8v7h-1v4H7v-4H6z" fill="currentColor"/></svg></button>
                            <button type="button" aria-label="Orizzontale"><svg width="22" height="18" viewBox="0 0 22 18"><path d="M1 1h20v16H1z" fill="none" stroke="currentColor" stroke-width="1.500"/><circle cx="11" cy="5.500" r="2.200" fill="currentColor"/><path d="M7 9h8v5h-1v4H8v-4H7z" fill="currentColor"/></svg></button>
                        </div>
                    </div>
                    <div>
                        <label for="tavole">Tavole da disegno</label>
                        <input type="checkbox" id="tavole">
                    </div>
                </div>
                <label for="risoluzione">Risoluzione</label>
                <div class="field-row">
                    <input type="text" id="risoluzione" value="72">
                    <span class="select"><select aria-label="Unità risoluzione"><option>Pixel/pollice</option></select><svg width="10" height="10"><use href="#i-chevron"/></svg></span>
                </div>
                <label for="metodo">Metodo colore</label>
                <div class="field-row">
                    <span class="select"><select id="metodo"><option>Colore RGB</option></select><svg width="10" height="10"><use href="#i-chevron"/></svg></span>
                    <span class="select bits"><select aria-label="Profondità"><option>8 bit</option></select><svg width="10" height="10"><use href="#i-chevron"/></svg></span>
                </div>
                <label for="sfondo">Contenuto sfondo</label>
                <div class="field-row">
                    <span class="select fill"><select id="sfondo"><option>Bianco</option></select><svg width="10" height="10"><use href="#i-chevron"/></svg></span>
                    <span class="swatch"></span>
                </div>
                <button type="button" class="advanced"><svg width="8" height="8"><use href="#i-chevright"/></svg> Opzioni avanzate</button>
                <div class="actions">
                    <button type="button" class="primary">Crea</button>
                    <button type="button">Chiudi</button>
                </div>
            </form>
        </div>
    </div>
</div>

<footer class="taskbar">
    <button type="button" class="start" aria-label="Start"><svg width="24" height="24" viewBox="0 0 24 24"><path d="M0 3.500l10-1.400v9.400H0zM11 2l13-2v11.500H11zM0 12.500h10v9.400L0 20.500zM11 12.500h13V24l-13-2z" fill="#fff"/></svg></button>
    <div class="cortana">
        <span class="ring"></span>
        <input type="text" aria-label="Cerca" placeholder="Chiedimi qualcosa">
        <svg width="18" height="26" viewBox="0 0 18 26" fill="none" stroke="#aaa" stroke-width="1.500"><rect x="5" y="1" width="8" height="17" rx="3"/><path d="M1.500 12v5c0 4 3 5 7.500 5s7.500-1 7.500-5v-5M9 22v3M5 25h8"/></svg>
    </div>
    <div class="tasks">
        <button type="button" class="task" aria-label="Visualizzazione attività"><svg width="32" height="24" viewBox="0 0 32 24" fill="none" stroke="#fff" stroke-width="1.500"><path d="M7 1h18v22H7zM4 5H1v14h3M28 5h3v14h-3"/></svg></button>
        <button type="button" class="task" aria-label="Esplora file"><svg width="34" height="30" viewBox="0 0 34 30"><path d="M1 1h12l2 4h18v22H1z" fill="#e8b93c"/><path d="M1 6h32v22H1z" fill="#fde794"/><path d="M6 28V15h22v13h-6v-7H12v7z" fill="#3bb1e4"/><path d="M3 2h6v2H3z" fill="#fff"/></svg></button>
        <button type="button" class="task open" aria-label="Edge"><svg width="34" height="34" viewBox="0 0 34 34"><path d="M1 15C2 5 9 0 17 0c9 0 16 6 16 16v4H12c0 5 4 8 9 8 4 0 7-1 10-3v7c-3 1-6 2-11 2C10 34 4 28 4 20c0-5 3-9 8-11-5 0-9 3-11 6zm11-1h12c0-4-2-7-6-7-3 0-6 3-6 7z" fill="#0078d7"/></svg></button>
        <button type="button" class="task open" aria-label="Chrome"><svg width="36" height="36" viewBox="0 0 36 36"><circle cx="18" cy="18" r="17" fill="#fc3"/><path d="M3 9a17 17 0 0 1 30 1H18a8 8 0 0 0-8 8z" fill="#db4437"/><path d="M3 9a17 17 0 0 0 13 26l7-12a8 8 0 0 1-13-3z" fill="#0f9d58"/><circle cx="18" cy="18" r="8" fill="#fff"/><circle cx="18" cy="18" r="6.500" fill="#4285f4"/><circle cx="28" cy="24" r="4" fill="#eee"/><path d="M23 36l3-9h4l3 9z" fill="#fff"/></svg></button>
        <button type="button" class="task open" aria-label="Firefox"><svg width="36" height="36" viewBox="0 0 36 36"><circle cx="19" cy="16" r="15" fill="#1b8ed6"/><path d="M20 2c8 0 13 6 13 13S27 28 20 28c8-3 8-12 4-16-3-3-6-6-4-10z" fill="#174f94"/><path d="M3 5c2 1 3 2 4 4 3-1 6 0 8 2-3 1-5 3-4 6 3 2 6 1 8 2-2 3-6 4-9 3 4 6 15 6 19-3 2-4 2-8 1-12 5 6 6 13 3 19-6 11-23 12-30 1C-1 19 0 11 3 5z" fill="#e8541e"/><path d="M31 9c4 6 4 13 0 19-5 6-13 8-20 5 9 0 16-5 18-12z" fill="#fdb913"/></svg></button>
        <button type="button" class="task open" aria-label="Thunderbird"><svg width="36" height="36" viewBox="0 0 36 36"><path d="M8 2c14-4 27 5 27 17 0 8-4 14-10 16L6 28C-2 20 2 8 8 2z" fill="#1c60ad"/><path d="M12 2c10 0 20 8 20 20-5-8-12-13-24-15z" fill="#4eb1e8"/><path d="M5 18c4-5 15-6 20 0l-2 12-13 1C4 29 2 24 5 18z" fill="#e9e5df"/><path d="M5 18l11 6 9-6" fill="none" stroke="#8c8d95"/></svg></button>
        <button type="button" class="task open" aria-label="Posta"><svg width="38" height="30" viewBox="0 0 38 30"><path d="M0 10L19 0l19 10v20H0z" fill="#fff"/><path d="M4 11h30L19 21z" fill="#02050a"/></svg><span class="badge">1</span></button>
        <button type="button" class="task" aria-label="Calendario"><svg width="32" height="37" viewBox="0 0 32 37"><path d="M0 4h5V0h3v7h16V0h3v4h5v33H0zM2 13v22h28V13z" fill="#fff" fill-rule="evenodd"/><path d="M10 17h4v4h-4zM16 17h4v4h-4zM22 17h4v4h-4zM5 23h4v4H5zM10 23h4v4h-4zM16 23h4v4h-4zM22 23h4v4h-4zM5 29h4v4H5zM10 29h4v4h-4zM16 29h4v4h-4z" fill="#fff"/></svg></button>
        <button type="button" class="task" aria-label="Contatti"><svg width="38" height="37" viewBox="0 0 38 37"><ellipse cx="11" cy="7" rx="7" ry="7" fill="#fff"/><ellipse cx="28" cy="7" rx="6" ry="6.500" fill="#fff"/><path d="M0 37V24c0-5 4-8 11-8s11 3 11 8v13zM22 16c9-4 16 1 16 8v10H25V24c0-4-1-6-3-8z" fill="#fff"/></svg></button>
        <button type="button" class="task" aria-label="Groove"><svg width="38" height="38" viewBox="0 0 38 38" fill="none" stroke="#fff" stroke-width="3"><path d="M33 10A17 17 0 1 1 27 4"/><circle cx="19" cy="20" r="5" stroke-width="4"/><path d="M28 15V8l5-5"/></svg></button>
        <button type="button" class="task open" aria-label="Skype"><svg width="36" height="36" viewBox="0 0 36 36"><path d="M2 3c4-4 9-3 12-1 10-2 20 5 19 17 3 4 3 10-1 14-4 4-9 3-12 0C10 35 1 27 3 16 0 12 0 7 2 3z" fill="#00aff0"/><path d="M24 11c-2-4-12-5-13 1-1 7 14 4 14 11 0 6-12 6-14 1" fill="none" stroke="#fff" stroke-width="4"/></svg></button>
        <button type="button" class="task" aria-label="Brackets"><span class="tile brackets">{&thinsp;}</span></button>
        <button type="button" class="task" aria-label="VirtualBox"><svg width="36" height="37" viewBox="0 0 36 37"><path d="M18 0l18 8v21l-18 8L0 29V8z" fill="#a9c0e6"/><path d="M0 8l18 7v22L0 29z" fill="#7d9cd8"/><path d="M0 8l18-8 18 8-18 7z" fill="#cfe4df"/><path d="M18 15l18-7v21l-18 8z" fill="#b9cdef"/></svg></button>
        <button type="button" class="task" aria-label="HeidiSQL"><svg width="36" height="36" viewBox="0 0 36 36"><circle cx="18" cy="18" r="17" fill="#e4e4e0"/><path d="M1 18a17 17 0 0 1 34 0z" fill="#43a518"/><path d="M7 10h22v16H7z" fill="#f5b51e"/><text x="18" y="24" text-anchor="middle" class="hs">HS</text></svg></button>
        <button type="button" class="task open" aria-label="Sublime Text"><svg width="36" height="32" viewBox="0 0 36 32"><path d="M4 0h28l4 29v3H0v-3z" fill="#bcbcbc"/><path d="M6 2h24l3 24H3z" fill="#4a4a4a"/><text x="18" y="21" text-anchor="middle" class="sublime">S</text></svg></button>
        <button type="button" class="task" aria-label="Blocco note"><svg width="34" height="34" viewBox="0 0 34 34"><path d="M9 2l22 3 3 23-7 2z" fill="#b98d4c"/><path d="M11 1l18 4-3 27L0 26z" fill="#5bbacb"/><path d="M11 1l18 4-1 8L7 9z" fill="#c8e9ee"/><path d="M10 1l19 4" stroke="#eee" stroke-width="2"/></svg></button>
        <button type="button" class="task" aria-label="Note"><svg width="30" height="28" viewBox="0 0 30 28"><path d="M0 0h30v17L19 28H0z" fill="#f6e793"/><path d="M30 17H19v11z" fill="#665f3a"/></svg></button>
        <button type="button" class="task open" aria-label="Acrobat"><span class="tile acrobat"><svg width="24" height="26" viewBox="0 0 24 26"><path d="M2 24c3 0 10-12 9-22-2-3-4 3 1 10 4 6 10 8 11 5 1-4-12-2-21 7z" fill="none" stroke="#eee" stroke-width="1.500"/></svg></span></button>
        <button type="button" class="task open running" aria-label="Photoshop"><span class="tile ps">Ps</span></button>
        <button type="button" class="task" aria-label="Illustrator"><span class="tile ai">Ai</span></button>
        <button type="button" class="task" aria-label="InDesign"><span class="tile id">Id</span></button>
        <button type="button" class="task" aria-label="Premiere"><span class="tile pr">Pr</span></button>
        <button type="button" class="task" aria-label="Experience Design"><span class="tile xd">Xd</span></button>
        <button type="button" class="task" aria-label="Dreamweaver"><span class="tile dw">Dw</span></button>
        <button type="button" class="task open" aria-label="WinSCP"><svg width="36" height="36" viewBox="0 0 36 36"><path d="M12 16V8c0-6 11-6 11 0v8" fill="none" stroke="#bbb" stroke-width="3"/><path d="M7 14h22v17H7z" fill="#6a6a6a"/><path d="M7 17h22M7 21h22M7 25h22" stroke="#999"/><path d="M0 0h13l-3 4 4 7-4 2-4-5-6 6z" fill="#1568dc"/><path d="M36 36H22l4-4-5-6 4-3 5 5 5-5z" fill="#18b31b"/></svg></button>
        <button type="button" class="task" aria-label="FileZilla"><svg width="37" height="37" viewBox="0 0 37 37"><path d="M0 0h37v37H0z" fill="#b90000"/><path d="M1 1h35v35H1z" fill="none" stroke="#700" stroke-dasharray="2 2"/><path d="M24 7H11L6 28M9 16h11M17 18h12L17 31h13" fill="none" stroke="#fff" stroke-width="4"/></svg></button>
        <button type="button" class="task" aria-label="Calcolatrice"><svg width="28" height="37" viewBox="0 0 28 37"><path d="M0 0h28v37H0z" fill="#fff"/><path d="M4 3h20v6H4zM4 13h5v4H4zM12 13h5v4h-5zM20 13h4v4h-4zM4 20h5v4H4zM12 20h5v4h-5zM20 20h4v4h-4zM4 28h5v4H4zM12 28h5v4h-5zM20 28h4v4h-4z" fill="#02050a"/></svg></button>
        <button type="button" class="task" aria-label="Word"><svg width="36" height="34" viewBox="0 0 36 34"><path d="M16 4h19v25H16z" fill="#fff"/><path d="M18 8h15M18 12h15M18 16h15M18 20h15M18 24h15" stroke="#2b579a" stroke-width="2"/><path d="M0 4l20-4v34L0 30z" fill="#2b579a"/><path d="M4 12l2.500 11L10 13l3 10 3-12" fill="none" stroke="#fff" stroke-width="2"/></svg></button>
        <button type="button" class="task" aria-label="Excel"><svg width="36" height="34" viewBox="0 0 36 34"><path d="M16 4h19v25H16z" fill="#fff"/><path d="M20 8h14M20 12h14M20 16h14M20 20h14M20 24h14M25 5v23M30 5v23" stroke="#217346" stroke-width="1.500"/><path d="M0 4l20-4v34L0 30z" fill="#217346"/><path d="M6 11l7 12M13 11L6 23" stroke="#fff" stroke-width="2.500"/></svg></button>
        <button type="button" class="task open" aria-label="OneNote"><svg width="36" height="34" viewBox="0 0 36 34"><path d="M16 4h17v25H16z" fill="#fff"/><path d="M20 8h12M20 12h12M20 16h12M20 20h12M20 24h12M33 7h3M33 13h3M33 19h3" stroke="#80397b" stroke-width="2"/><path d="M0 4l20-4v34L0 30z" fill="#80397b"/><path d="M6 23V12l8 10V11" fill="none" stroke="#fff" stroke-width="2.500"/></svg></button>
        <button type="button" class="task" aria-label="Android Studio"><svg width="34" height="36" viewBox="0 0 34 36"><circle cx="17" cy="16" r="16" fill="#7cb342"/><circle cx="17" cy="12" r="5" fill="#455a64"/><path d="M15 6h4v5h-4z" fill="#455a64"/><path d="M15 15L5 35M19 15l10 20" stroke="#eee" stroke-width="3"/><path d="M7 23c5 5 15 5 20 0" fill="none" stroke="#eee" stroke-width="2"/></svg></button>
        <button type="button" class="task" aria-label="Ubuntu"><svg width="37" height="37" viewBox="0 0 37 37"><circle cx="18.500" cy="18.500" r="18" fill="#dd4814"/><circle cx="18.500" cy="18.500" r="9" fill="none" stroke="#fff" stroke-width="4" stroke-dasharray="16 2.850"/><circle cx="6" cy="18.500" r="3" fill="#fff"/><circle cx="25" cy="7.500" r="3" fill="#fff"/><circle cx="25" cy="29.500" r="3" fill="#fff"/></svg></button>
        <button type="button" class="task" aria-label="PowerShell"><svg width="36" height="28" viewBox="0 0 36 28"><path d="M7 0h29l-7 28H0z" fill="#3a6fd8"/><path d="M11 5l8 8L7 22M18 22h9" fill="none" stroke="#fff" stroke-width="2.500"/></svg></button>
        <button type="button" class="task" aria-label="VMware"><svg width="34" height="36" viewBox="0 0 34 36"><path d="M13 4l13-1c2 0 4 1 4 3v19c0 2-2 3-4 3l-13 1c-2 0-3-1-3-3V7c0-2 1-3 3-3z" fill="none" stroke="#45b5d3" stroke-width="6"/><path d="M7 11l12-1c2 0 3 1 3 3v14c0 2-1 3-3 3L7 32c-2 0-3-1-3-3V14c0-2 1-3 3-3z" fill="none" stroke="#f5a81f" stroke-width="6"/></svg></button>
    </div>
    <div class="tray">
        <svg width="18" height="12" viewBox="0 0 18 12"><path d="M1 11l8-9 8 9" fill="none" stroke="#fff" stroke-width="1.500"/></svg>
        <svg width="22" height="20" viewBox="0 0 22 20" fill="none" stroke="#bbb" stroke-width="2"><path d="M7 17a6 6 0 0 1-1-11c2-6 11-6 14 0 2 6-1 11-7 11z" fill="#444"/><path d="M13 14L7 9c-2 0-3 5 1 5M10 8l5 5c3-1 3-6-1-7-3 0-4 2-4 4" stroke-width="1.500"/></svg>
        <svg width="18" height="26" viewBox="0 0 18 26" fill="none" stroke="#fff" stroke-width="1.300"><path d="M4 1h8v6H4zM2 7h12v16H2zM6 3v2M10 3v2M10 19l4 4 4-6"/></svg>
        <svg width="22" height="22" viewBox="0 0 22 22"><path d="M1 2c2-2 5-2 7-1 8-1 13 4 12 11 2 3 2 6 0 8-2 2-5 2-7 0C6 21 1 17 2 10 0 7 0 4 1 2z" fill="#7fba00"/><path d="M6 11l4 4 6-8" fill="none" stroke="#fff" stroke-width="2"/></svg>
        <svg width="24" height="20" viewBox="0 0 24 20" fill="none" stroke="#fff" stroke-width="1.300"><path d="M6 2h17v13H3V9M12 15v4M7 19h11M1 1h5v7H1z"/></svg>
        <svg width="22" height="20" viewBox="0 0 22 20" fill="none" stroke="#fff" stroke-width="1.300"><path d="M1 6h4l6-5v18l-6-5H1zM14 7l7 7M21 7l-7 7"/></svg>
        <span class="lang">ITA</span>
        <time class="clock">12:05<br>13/04/2017</time>
        <div class="notice"><svg width="24" height="26" viewBox="0 0 24 26"><path d="M0 0h24v20H14l-4 5v-5H0z" fill="#fff"/><path d="M5 5h14M5 9h14M5 13h9" stroke="#02050a" stroke-width="1.500"/></svg><span class="badge">1</span></div>
    </div>
</footer>

</body>
</html>
```
FILE: styles.css
```
* {
    box-sizing: border-box;
}
body {
    margin: 0;
    min-height: 100vh;
    display: flex;
    flex-direction: column;
    background: #101010;
    color: #d6d6d6;
    font-family: "Open Sans", "Noto Sans", sans-serif;
    font-size: 14px;
    line-height: 20px;
}
svg {
    display: block;
    flex-shrink: 0;
}
button, input, select {
    margin: 0;
    padding: 0;
    border: 0;
    background: none;
    color: inherit;
    font: inherit;
}
a {
    color: inherit;
    text-decoration: none;
}
h1, h2, h3, p {
    margin: 0;
    font-weight: normal;
}
.sprite {
    position: absolute;
    width: 0;
    height: 0;
}
.app {
    position: relative;
    flex: 1;
    display: flex;
    flex-direction: column;
}

/* barra dei menu */
.menubar {
    display: flex;
    align-items: center;
    height: 45px;
    background: #323232;
    border-bottom: 2px solid #222;
}
.logo {
    width: 51px;
    padding-left: 12px;
    color: #75a1d2;
    font-size: 27px;
    font-weight: bold;
    line-height: 40px;
}
.menu {
    display: flex;
    gap: 19px;
    padding-left: 23px;
    font-size: 18px;
    line-height: 24px;
}
.window-buttons {
    align-self: flex-start;
    display: flex;
    height: 30px;
    margin-left: auto;
    margin-right: 5px;
    border: 1px solid #424242;
    border-top: 0;
    border-radius: 0 0 4px 4px;
    color: #8f8f8f;
}
.window-buttons button {
    width: 42px;
    display: grid;
    place-items: center;
    border-right: 1px solid #424242;
}
.window-buttons .wide {
    width: 72px;
    border-right: 0;
}

/* barra delle opzioni */
.options {
    display: flex;
    align-items: center;
    height: 53px;
    background: #323232;
    border-bottom: 2px solid #292929;
}
.opt {
    display: flex;
    align-items: center;
    height: 36px;
    border-left: 2px solid #262626;
}
.opt.first {
    width: 96px;
    padding-left: 8px;
    border-left: 0;
}
.grip-v {
    width: 5px;
    height: 30px;
    margin-right: 21px;
    background: repeating-linear-gradient(#262626 0 1px, transparent 1px 3px);
}
.opt.first .chev {
    margin-left: 13px;
    color: #a8a8a8;
}
.opt.auto {
    width: 249px;
    padding: 0 12px 0 9px;
    justify-content: space-between;
}
.opt.transform {
    width: 236px;
    padding-left: 12px;
}
.check {
    display: flex;
    align-items: center;
    gap: 8px;
    white-space: nowrap;
}
input[type="checkbox"] {
    appearance: none;
    width: 18px;
    height: 18px;
    border: 2px solid #666;
    border-radius: 3px;
}
.check input:checked {
    background: #d0d0d0;
    border-color: #d0d0d0;
    position: relative;
}
.check input:checked::after {
    content: "";
    position: absolute;
    left: 4px;
    top: 0;
    width: 4px;
    height: 8px;
    border: solid #222;
    border-width: 0 3px 3px 0;
    transform: rotate(40deg);
}
.select {
    position: relative;
    display: block;
    border: 2px solid #414141;
    border-radius: 4px;
    background: #272727;
}
.select select {
    appearance: none;
    width: 100%;
    height: 100%;
    padding-left: 10px;
    display: block;
}
.select svg {
    position: absolute;
    right: 6px;
    top: calc(50% - 6px);
    color: #999;
    pointer-events: none;
}
.opt .select {
    width: 99px;
    height: 30px;
}
.align {
    width: 281px;
    padding-left: 19px;
    gap: 16px;
    color: #888;
}
.align .apart {
    margin-left: 14px;
}
.single {
    width: 67px;
    justify-content: center;
    color: #888;
}
.mode3d {
    padding-left: 14px;
    gap: 13px;
    color: #858585;
}
.mode3d span {
    width: 75px;
    color: #777;
}
.opt-right {
    display: flex;
    align-items: center;
    margin-left: auto;
    padding-right: 12px;
    color: #8f8f8f;
}
.opt-right .divider {
    width: 2px;
    height: 36px;
    margin: 0 13px;
    background: #262626;
}
.opt-right .chev {
    margin-left: 13px;
    color: #666;
}

/* area di lavoro */
.workspace {
    flex: 1;
    display: flex;
}
.strip {
    display: flex;
    align-items: center;
    height: 19px;
    padding: 0 8px;
    background: #262626;
    border-bottom: 2px solid #222;
    color: #aaa;
}
.strip.end {
    justify-content: flex-end;
}
.grip {
    display: block;
    width: 30px;
    height: 6px;
    margin: 0 auto;
    background: repeating-linear-gradient(90deg, #262626 0 2px, transparent 2px 3px);
}
.toolbar {
    width: 63px;
    background: #323232;
    border-left: 1px solid #242424;
    border-right: 3px solid #242424;
}
.toolbar > .grip {
    margin-top: 5px;
}
.tools {
    display: flex;
    flex-direction: column;
    justify-content: space-between;
    height: 847px;
    margin-top: 14px;
}
.tool {
    position: relative;
    display: grid;
    place-items: center;
    width: 48px;
    height: 40px;
    margin-left: 5px;
}
.tool.active {
    background: #1f1f1f;
    border: 1px solid #3e3e3e;
    border-radius: 4px;
}
/* triangolino degli strumenti nascosti */
.tool::after {
    content: "";
    position: absolute;
    right: 4px;
    bottom: 4px;
    border-left: 5px solid transparent;
    border-bottom: 5px solid #bbb;
}
.tool.plain::after {
    content: none;
}
.tool.letter {
    font: bold 30px/40px "Liberation Serif", serif;
}
.gradient, .shape {
    width: 26px;
    height: 20px;
    border: 1px solid #d6d6d6;
    background: linear-gradient(90deg, #222, #bbb);
}
.shape {
    background: #555;
}
.color-actions {
    display: flex;
    justify-content: space-between;
    width: 43px;
    margin: 8px 0 0 6px;
}
.colors {
    position: relative;
    width: 46px;
    height: 46px;
    margin: 8px 0 8px 6px;
}
.colors span {
    position: absolute;
    width: 30px;
    height: 30px;
}
.colors .front {
    left: 0;
    top: 0;
    background: #fff;
    border: 1px solid #111;
}
.colors .back {
    right: 0;
    bottom: 0;
    background: #000;
    border: 2px solid #fff;
    outline: 1px solid #111;
}
.center {
    flex: 1;
    display: flex;
    flex-direction: column;
}
.canvas {
    flex: 1;
}
.timeline {
    display: flex;
    align-items: center;
    justify-content: space-between;
    height: 32px;
    padding-right: 11px;
    background: #262626;
    border-top: 2px solid #222;
    border-bottom: 3px solid #2f2f2f;
    color: #8f8f8f;
}
.timeline-tab {
    height: 100%;
    padding: 0 12px;
    background: #323232;
    color: #d6d6d6;
    font-size: 15px;
    font-weight: 600;
}
.icon-dock {
    width: 65px;
    background: #323232;
    border-left: 3px solid #242424;
    border-right: 3px solid #242424;
}
.icon-dock .strip {
    padding-right: 9px;
}
.dock-group {
    height: 64px;
    display: flex;
    flex-direction: column;
    align-items: center;
    padding-top: 6px;
    border-bottom: 2px solid #242424;
}
.dock-group svg {
    margin: auto 0;
}
.dock-group.two {
    height: 107px;
    padding-bottom: 4px;
}

/* pannello livelli */
.layers {
    width: 447px;
    display: flex;
    flex-direction: column;
    background: #323232;
    border-right: 2px solid #242424;
    color: #8a8a8a;
}
.tabs {
    display: flex;
    height: 26px;
    background: #262626;
}
.tabs button {
    padding: 0 10px;
    border-right: 1px solid #222;
    font-size: 15px;
    font-weight: 600;
}
.tabs .selected {
    background: #323232;
    color: #eee;
}
.tabs svg {
    margin: auto 8px auto auto;
}
.layer-row {
    display: flex;
    align-items: center;
    height: 43px;
    padding: 0 7px 0 6px;
    border-bottom: 2px solid #262626;
}
.layer-row.filter {
    height: 49px;
    padding-top: 6px;
}
.layer-row .select {
    height: 28px;
    border: 1px solid #414141;
    background: #2a2a2a;
}
.layers .select select {
    padding-left: 12px;
}
.layers .select svg, .number svg {
    color: #777;
}
.select.type {
    width: 174px;
}
.layers .type select {
    padding-left: 34px;
}
.select .lens {
    left: 11px;
    top: 5px;
}
.filter-icons {
    display: flex;
    align-items: center;
    gap: 19px;
    margin-left: 35px;
}
.filter-icons .t {
    width: 18px;
    text-align: center;
    font: bold 22px/20px "Liberation Serif", serif;
}
.switch {
    width: 14px;
    height: 28px;
    margin-left: auto;
    border: 1px solid #444;
    border-radius: 7px;
    background: radial-gradient(circle at 50% 6px, #8a8a8a 6px, #2a2a2a 7px);
}
.select.blend {
    width: 276px;
}
.amount {
    display: flex;
    align-items: center;
    gap: 7px;
    margin-left: auto;
}
.number {
    display: flex;
    align-items: center;
    width: 81px;
    height: 28px;
    padding-right: 7px;
    border: 1px solid #414141;
    border-radius: 4px;
    background: #2a2a2a;
}
.number input {
    flex: 1;
    min-width: 0;
    height: 100%;
    margin-right: 7px;
    border-right: 1px solid #414141;
}
.lock-label {
    width: 48px;
    padding-left: 4px;
}
.lock-icons {
    display: flex;
    align-items: center;
    gap: 15px;
    margin-left: 8px;
}
.layer-list {
    flex: 1;
    background: #2a2a2a;
}
.layer-footer {
    display: flex;
    align-items: center;
    justify-content: flex-end;
    gap: 23px;
    height: 40px;
    padding-right: 44px;
    padding-bottom: 2px;
    border-top: 2px solid #262626;
}
.layer-footer em {
    font: italic 22px/20px "Liberation Serif", serif;
}

/* finestra di dialogo */
.dialog {
    position: absolute;
    left: 928px;
    top: 588px;
    width: 1662px;
    height: 1004px;
    background: #fff;
    border-left: 1px solid #0078d7;
}
.dialog-title {
    display: flex;
    align-items: center;
    justify-content: space-between;
    height: 49px;
    padding: 0 17px 0 13px;
    background: #0078d7;
    color: #fff;
}
.dialog-title h1 {
    font-size: 18px;
    line-height: 24px;
}
.dialog-title button {
    height: 24px;
}
.newdoc {
    display: grid;
    grid-template-columns: 585px 239px;
    grid-template-rows: 13px 440px;
    width: 824px;
    background: #1b1b1b;
    font-family: Lato, "Open Sans", sans-serif;
    font-size: 9px;
    line-height: 12px;
}
.newdoc-tabs {
    grid-column: 1 / 3;
    display: flex;
    align-items: flex-end;
    padding-left: 127px;
    background: #323232;
    border-bottom: 1px solid #262626;
}
.newdoc-tabs span {
    width: 35px;
    height: 3px;
    background: #fff;
}
.browse {
    display: grid;
    grid-template-columns: 554px 5px;
    grid-template-rows: 383px 40px;
    column-gap: 10px;
    row-gap: 7px;
    padding-left: 12px;
}
.browse-scroll {
    overflow: hidden;
    padding-top: 14px;
}
.hero {
    position: relative;
    height: 126px;
    padding-top: 29px;
    background: #2d2d2d;
    border-radius: 4px;
    text-align: center;
    color: #eee;
}
.hero button {
    position: absolute;
    top: 10px;
    right: 10px;
    color: #b4b4b4;
}
.hero h2 {
    color: #fff;
    font-size: 20px;
    line-height: 26px;
}
.hero p {
    margin-top: 8px;
    font-size: 12px;
    line-height: 16px;
}
.hero a {
    color: #4a86c4;
}
.browse h3 {
    margin: 20px 0 13px;
    color: #cfcfcf;
    font-size: 9px;
    line-height: 12px;
}
.browse h3 span {
    margin-left: 3px;
    color: #999;
}
.recent {
    display: grid;
    grid-template-columns: repeat(4, 130px);
    grid-auto-rows: 119px;
    gap: 11px;
}
.preset {
    display: flex;
    flex-direction: column;
    align-items: center;
    padding-top: 19px;
    background: #323232;
    border-radius: 3px;
    color: #a6a6a6;
}
.preset b {
    margin-top: 11px;
    color: #bbb;
    font-weight: normal;
}
.preset.current {
    box-shadow: inset 0 0 0 2px #2268b8;
}
.preset.current b {
    color: #fff;
    font-weight: bold;
}
.scrollbar {
    height: 377px;
    margin-top: 3px;
    background: #2f2f2f;
    border-radius: 2px;
}
.scrollbar span {
    display: block;
    height: 170px;
    background: #505050;
    border-radius: 2px;
}
.stock {
    display: flex;
    align-items: center;
    padding-left: 136px;
    background: #2d2d2d;
    border-radius: 4px;
    color: #b0b0b0;
}
.stock input {
    width: 210px;
    height: 26px;
    margin: 0 6px;
    border-bottom: 1px solid #383838;
    font-size: 11px;
}
.stock input::placeholder {
    color: #777;
    font-style: italic;
    opacity: 1;
}
.stock button, .actions button {
    height: 25px;
    padding: 0 11px;
    border: 2px solid #a8a8a8;
    border-radius: 13px;
    font-size: 11px;
    font-weight: bold;
}
.details {
    display: flex;
    flex-direction: column;
    padding: 14px 16px 15px 15px;
    background: #323232;
    color: #929292;
}
.details label, .caption {
    display: block;
    height: 14px;
    line-height: 12px;
    white-space: nowrap;
}
.details input[type="text"] {
    width: 57px;
    height: 25px;
    padding-left: 6px;
    border: 1px solid #3b3b3b;
    border-radius: 2px;
    background: #2a2a2a;
    color: #d8d8d8;
    font-size: 10px;
}
.details .name-row input[type="text"] {
    flex: 1;
    min-width: 0;
    height: 26px;
    padding: 0;
    border: 0;
    border-bottom: 1px solid #424242;
    background: none;
    font-size: 15px;
}
.name-row {
    display: flex;
    align-items: center;
    gap: 7px;
    padding-right: 3px;
    margin: 6px 0 9px;
}
.field-row {
    display: flex;
    gap: 7px;
    margin-bottom: 7px;
}
.details .select {
    flex: 1;
    height: 26px;
    border: 1px solid #3b3b3b;
    border-radius: 2px;
    background: #2d2d2d;
    color: #d8d8d8;
    font-size: 10px;
}
.details .select select {
    padding-left: 8px;
}
.details .select svg {
    right: 7px;
    top: 8px;
    color: #777;
}
.details .bits {
    flex: 0 0 72px;
}
.details .fill {
    flex: 0 0 149px;
}
.swatch {
    width: 22px;
    height: 22px;
    margin: 1px 0 0 2px;
    background: #fff;
    border-radius: 1px;
}
.triple {
    display: grid;
    grid-template-columns: 65px 74px 70px;
    margin-bottom: 12px;
}
.orient {
    display: flex;
    align-items: center;
    gap: 12px;
    padding: 1px 0 0 4px;
    color: #777;
}
.orient .on {
    color: #4a9ef5;
}
.details input[type="checkbox"] {
    display: block;
    width: 13px;
    height: 13px;
    margin-top: 5px;
    border: 1px solid #8a8a8a;
    border-radius: 1px;
}
.advanced {
    display: flex;
    align-items: center;
    gap: 3px;
    margin-top: 2px;
    padding-left: 2px;
}
.actions {
    display: flex;
    justify-content: flex-end;
    gap: 15px;
    margin-top: auto;
}
.actions button {
    color: #c4c4c4;
    border-color: #b4b4b4;
}
.actions .primary {
    background: #1473e6;
    border-color: #1473e6;
    color: #fff;
}

/* barra delle applicazioni */
.taskbar {
    display: flex;
    height: 62px;
    background: #020509;
    color: #fff;
}
.start {
    width: 75px;
    display: grid;
    place-items: center;
}
.cortana {
    width: 534px;
    display: flex;
    align-items: center;
    padding: 0 23px 0 15px;
    background: #333;
}
.ring {
    width: 42px;
    height: 42px;
    border: 4px solid #fff;
    border-radius: 50%;
    box-shadow: 0 0 0 1px #999, inset 0 0 0 1px #999;
}
.cortana input {
    flex: 1;
    padding-left: 16px;
    font-size: 22px;
    line-height: 30px;
}
.cortana input::placeholder {
    color: #a6a6a6;
    opacity: 1;
}
.tasks {
    display: flex;
    gap: 2px;
    padding-left: 1px;
}
.task {
    position: relative;
    width: 76px;
    display: grid;
    place-items: center;
}
.task.open::before {
    content: "";
    position: absolute;
    left: 6px;
    right: 6px;
    bottom: 0;
    height: 3px;
    background: #76b9ed;
}
.task.running {
    background: #33363d;
}
.task.running::before {
    left: 0;
    right: 0;
}
.badge {
    position: absolute;
    left: 44px;
    top: 30px;
    width: 25px;
    height: 25px;
    border: 1px solid #888;
    border-radius: 50%;
    background: #262829;
    font-size: 16px;
    line-height: 22px;
    text-align: center;
}
.tile {
    width: 36px;
    height: 35px;
    display: grid;
    place-items: center;
    border: 2px solid;
    font-size: 18px;
    font-weight: 600;
    line-height: 24px;
}
.brackets {
    height: 37px;
    border: 0;
    background: #3b82fb;
    color: #fff;
    font-weight: normal;
}
.acrobat {
    background: #2a0505;
    border-color: #a51c12;
}
.ps {
    background: #001d26;
    color: #00c8ff;
    border-color: #0a9dc7;
}
.ai {
    background: #261300;
    color: #ff7c00;
    border-color: #b75f14;
}
.id {
    background: #26000e;
    color: #ff3f8c;
    border-color: #b42d66;
}
.pr {
    background: #1f0026;
    color: #ea77ff;
    border-color: #a04fc0;
}
.xd {
    width: 33px;
    height: 32px;
    background: #2e001e;
    color: #ff2bc2;
    border-color: #ef3fb2;
}
.dw {
    background: #0d1c00;
    color: #7cf02a;
    border-color: #55b81c;
}
.hs {
    font-size: 16px;
    font-weight: bold;
}
.sublime {
    fill: #ff9420;
    font-size: 20px;
    font-weight: bold;
}
.tray {
    display: flex;
    align-items: center;
    gap: 14px;
    margin-left: auto;
    margin-right: 5px;
    padding-right: 35px;
    border-right: 1px solid #777;
}
.lang {
    margin: 0 12px 0 36px;
    font-size: 17px;
}
.clock {
    margin-right: 16px;
    font-size: 17px;
    line-height: 29px;
    text-align: center;
}
.notice {
    position: relative;
}
.notice .badge {
    left: 12px;
    top: 10px;
}
```
